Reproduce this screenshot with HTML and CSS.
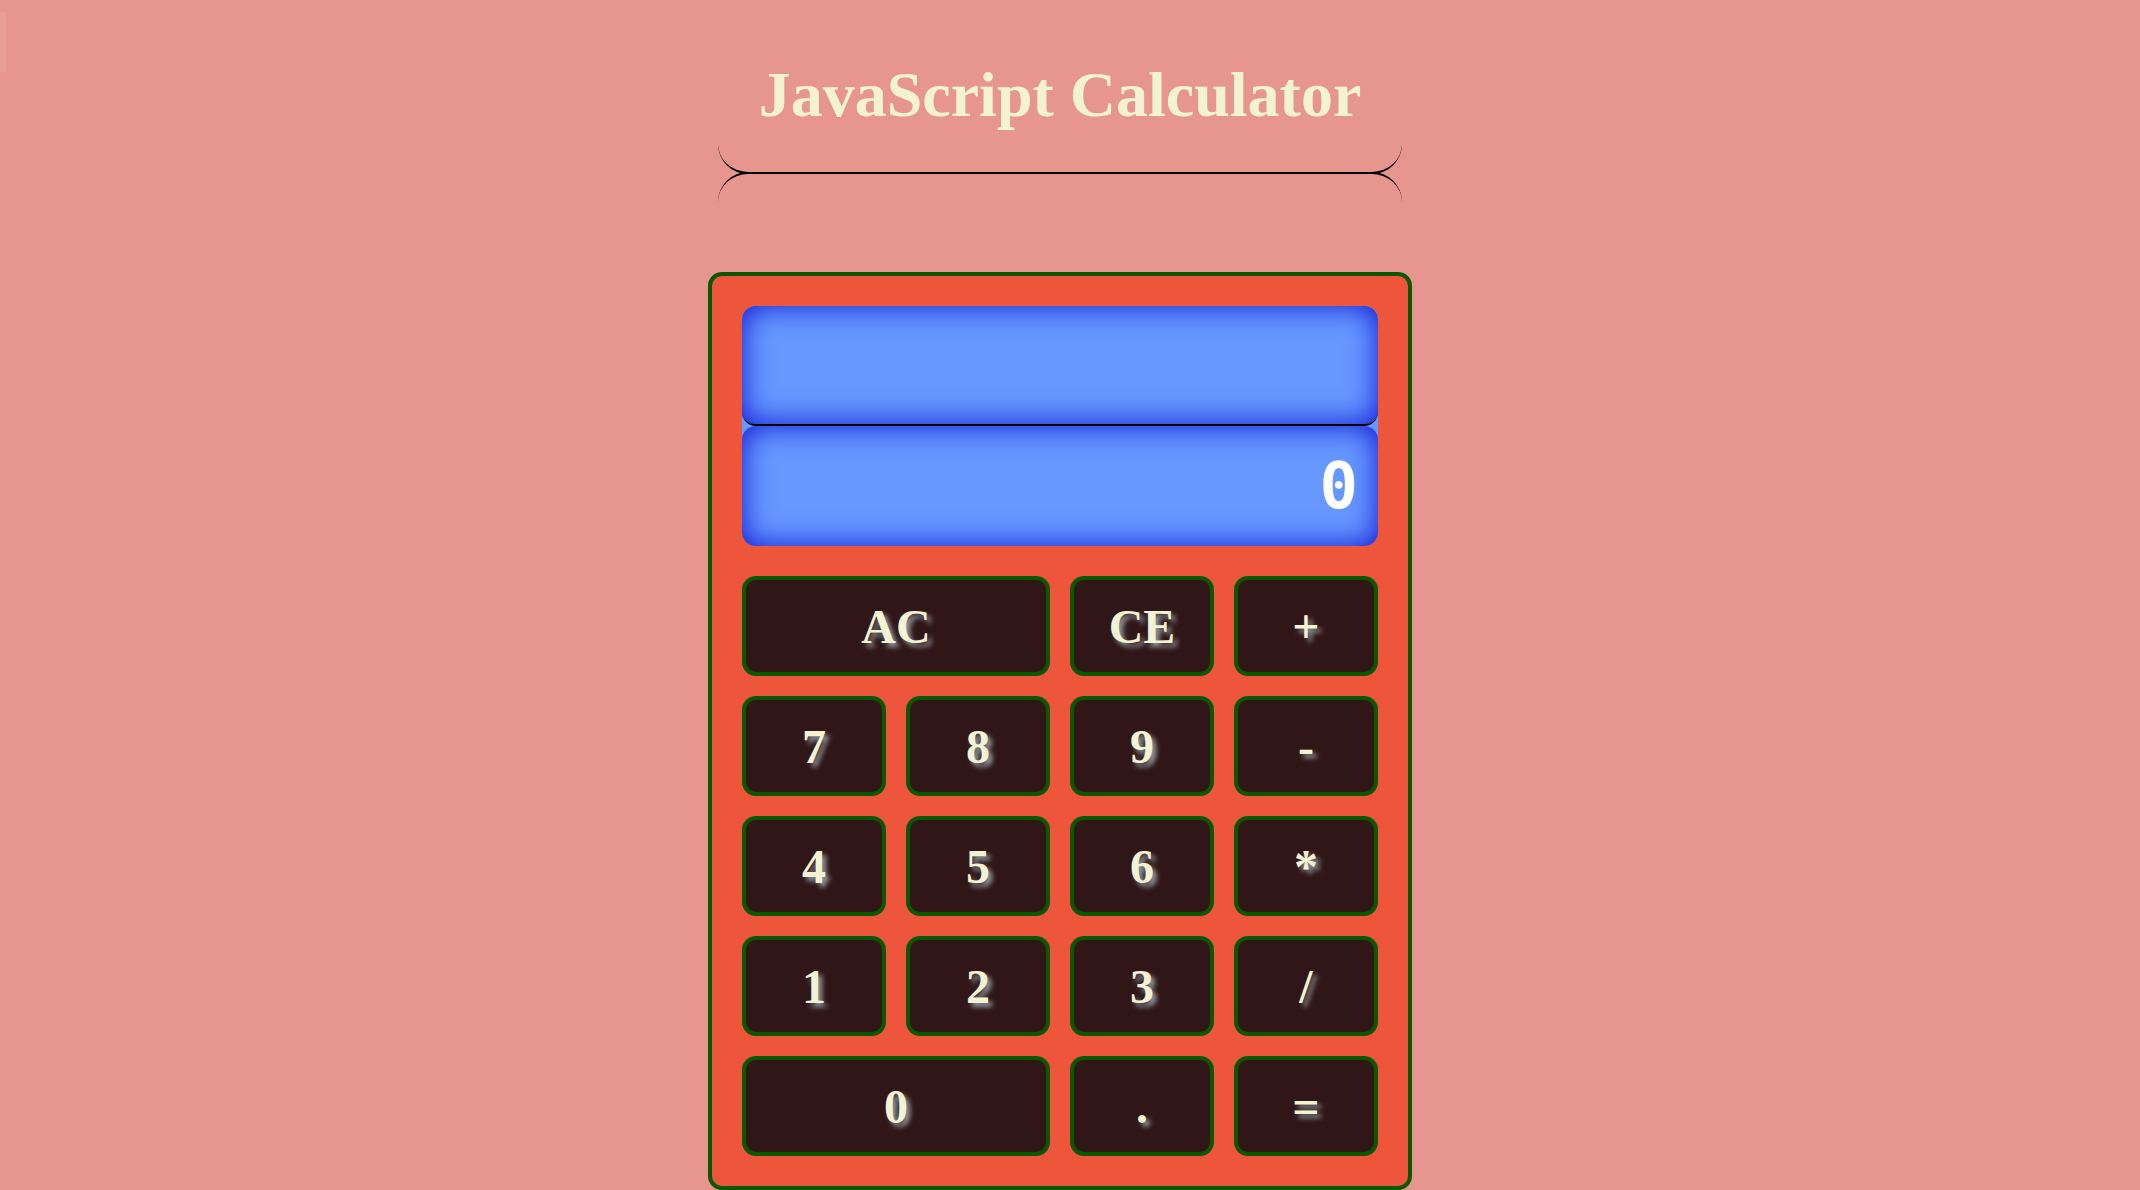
FILE: index.html
```html
<!DOCTYPE html>
<html lang="en">
<head>
<meta charset="utf-8">
<title>JavaScript Calculator</title>
<link rel="stylesheet" href="styles.css">
</head>
<body>
<div class="edge-tab"></div>
<header class="header">
  <h1 class="title">JavaScript Calculator</h1>
  <div class="divider"></div>
</header>
<main class="calculator">
  <div class="display">
    <output class="screen history" aria-label="Expression"></output>
    <output class="screen" aria-label="Current value">0</output>
  </div>
  <div class="keys">
    <button class="key wide" type="button">AC</button>
    <button class="key" type="button">CE</button>
    <button class="key" type="button">+</button>
    <button class="key" type="button">7</button>
    <button class="key" type="button">8</button>
    <button class="key" type="button">9</button>
    <button class="key" type="button">-</button>
    <button class="key" type="button">4</button>
    <button class="key" type="button">5</button>
    <button class="key" type="button">6</button>
    <button class="key" type="button">*</button>
    <button class="key" type="button">1</button>
    <button class="key" type="button">2</button>
    <button class="key" type="button">3</button>
    <button class="key" type="button">/</button>
    <button class="key wide" type="button">0</button>
    <button class="key" type="button">.</button>
    <button class="key" type="button">=</button>
  </div>
</main>
</body>
</html>
```
FILE: styles.css
```css
*,
*::before,
*::after {
  box-sizing: border-box;
}

body {
  margin: 0;
  padding: 0 20px 0 0;
  display: flex;
  flex-direction: column;
  align-items: center;
  background: #e6968e;
  color: #f3f2d3;
  font-family: "Liberation Serif", "Times New Roman", serif;
}

.edge-tab {
  position: absolute;
  left: 0;
  top: 12px;
  width: 6px;
  height: 60px;
  background: #e99f93;
}

.header {
  width: 100%;
  max-width: 684px;
  padding-top: 58px;
}

.title {
  margin: 0;
  font-size: 64px;
  line-height: 74px;
  text-align: center;
}

.divider {
  margin-top: 12px;
}

.divider::before,
.divider::after {
  content: "";
  display: block;
  height: 30px;
}

.divider::before {
  border-bottom: 2px solid #000;
  border-radius: 0 0 30px 30px;
}

.divider::after {
  margin-top: -2px;
  border-top: 2px solid #000;
  border-radius: 30px 30px 0 0;
}

.calculator {
  width: 100%;
  max-width: 704px;
  margin-top: 70px;
  padding: 30px;
  border: 4px solid #0b5800;
  border-radius: 14px;
  background: #ee563b;
}

.display {
  border-radius: 14px;
  background: #6698ff;
}

.screen {
  display: flex;
  align-items: center;
  justify-content: flex-end;
  height: 120px;
  padding: 0 20px;
  border-radius: 14px;
  box-shadow: inset 0 0 30px #0f14d2;
  color: #fff;
  font-family: "DejaVu Sans Mono", monospace;
  font-size: 64px;
  font-weight: bold;
  line-height: 72px;
}

.history {
  border-bottom: 2px solid #000;
}

.keys {
  display: grid;
  grid-template-columns: repeat(4, 1fr);
  gap: 20px;
  margin-top: 30px;
}

.key {
  height: 100px;
  padding: 0;
  border: 4px solid #0b5800;
  border-radius: 14px;
  background: #301617;
  color: inherit;
  font-family: inherit;
  font-size: 48px;
  font-weight: bold;
  text-shadow: 4px 4px 5px #8f9ba0;
}

.wide {
  grid-column: span 2;
}
```
